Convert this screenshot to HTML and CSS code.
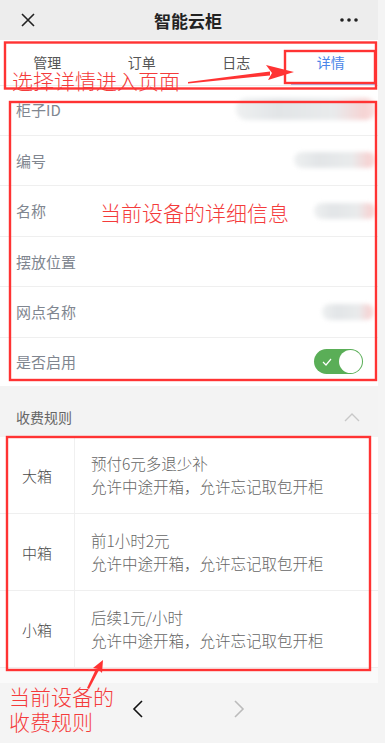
FILE: index.html
```html
<!DOCTYPE html>
<html>

<head>
    <meta charset="utf-8">
    <title>智能云柜</title>
    <link rel="stylesheet" href="styles.css">
</head>

<body>
    <div class="page">
        <header class="nav">
            <svg class="nav-close" width="16" height="16" viewBox="0 0 16 16">
                <path d="M2 2 L14 14 M14 2 L2 14" stroke="#222" stroke-width="1.6" fill="none" />
            </svg>
            <h1 class="nav-title">智能云柜</h1>
            <svg class="nav-more" width="18" height="4" viewBox="0 0 18 4">
                <circle cx="2" cy="2" r="1.8" fill="#222" />
                <circle cx="9" cy="2" r="1.8" fill="#222" />
                <circle cx="16" cy="2" r="1.8" fill="#222" />
            </svg>
        </header>

        <nav class="tabs">
            <span class="tab">管理</span>
            <span class="tab">订单</span>
            <span class="tab">日志</span>
            <span class="tab active">详情</span>
        </nav>

        <!-- device details -->
        <section class="info">
            <div class="row">
                <span class="label">柜子ID</span>
                <span class="smudge smudge-id"></span>
            </div>
            <div class="row">
                <span class="label">编号</span>
                <span class="smudge smudge-no"></span>
            </div>
            <div class="row">
                <span class="label">名称</span>
                <span class="smudge smudge-name"></span>
            </div>
            <div class="row">
                <span class="label">摆放位置</span>
            </div>
            <div class="row">
                <span class="label">网点名称</span>
                <span class="smudge smudge-site"></span>
            </div>
            <div class="row row-last">
                <span class="label">是否启用</span>
                <span class="switch">
                    <svg class="switch-tick" width="10" height="8" viewBox="0 0 10 8">
                        <path d="M1 4 L4 7 L9 1" stroke="#fff" stroke-width="1.2" fill="none" />
                    </svg>
                    <span class="switch-knob"></span>
                </span>
            </div>
        </section>

        <div class="section-head">
            <span>收费规则</span>
            <svg width="16" height="9" viewBox="0 0 16 9">
                <path d="M1 8 L8 1 L15 8" stroke="#c8c8c8" stroke-width="1.4" fill="none" />
            </svg>
        </div>

        <!-- fee rules -->
        <section class="fees">
            <div class="fee">
                <div class="fee-size">大箱</div>
                <div class="fee-desc">
                    <p>预付6元多退少补</p>
                    <p>允许中途开箱，允许忘记取包开柜</p>
                </div>
            </div>
            <div class="fee">
                <div class="fee-size">中箱</div>
                <div class="fee-desc">
                    <p>前1小时2元</p>
                    <p>允许中途开箱，允许忘记取包开柜</p>
                </div>
            </div>
            <div class="fee">
                <div class="fee-size">小箱</div>
                <div class="fee-desc">
                    <p>后续1元/小时</p>
                    <p>允许中途开箱，允许忘记取包开柜</p>
                </div>
            </div>
        </section>

        <div class="spacer"></div>

        <footer class="toolbar">
            <svg width="12" height="18" viewBox="0 0 12 18">
                <path d="M10 1 L2 9 L10 17" stroke="#111" stroke-width="1.6" fill="none" />
            </svg>
            <svg width="12" height="18" viewBox="0 0 12 18">
                <path d="M2 1 L10 9 L2 17" stroke="#bbb" stroke-width="1.6" fill="none" />
            </svg>
        </footer>

        <!-- red annotations drawn over the screenshot -->
        <svg class="marks" width="378" height="743" viewBox="0 0 378 743">
            <g fill="none" stroke="#f33" stroke-width="2.4">
                <rect x="5" y="42.5" width="371" height="46" />
                <rect x="285" y="51" width="90" height="32" />
                <rect x="10" y="102" width="366" height="278" />
                <rect x="7" y="437" width="363" height="233" />
            </g>
            <g fill="#f33">
                <polygon points="188,82 270,71.5 270,75.5 188,83.5" />
                <polygon points="266,65 294,72 268,80 272,73" />
                <polygon points="87,688 96,669 99,670 89,689" />
                <polygon points="93,668 103,660 102,673 98,669" />
            </g>
        </svg>
        <span class="note note-tab">选择详情进入页面</span>
        <span class="note note-info">当前设备的详细信息</span>
        <span class="note note-fee">当前设备的<br>收费规则</span>
    </div>
</body>

</html>
```

FILE: styles.css
```css
body {
    background: #f4f4f4;
    font-family: "Noto Sans CJK SC", "Noto Sans", sans-serif;
    margin: 0;
    padding: 0;
}

.page {
    background: #f3f3f3;
    display: flex;
    flex-direction: column;
    height: 743px;
    overflow: hidden;
    position: relative;
    width: 378px;
}

.nav {
    align-items: center;
    background: #ededed;
    display: flex;
    flex: none;
    height: 40px;
    justify-content: space-between;
    padding: 0 20px 0 20px;
}

.nav-title {
    color: #222;
    font-size: 17px;
    font-weight: bold;
    margin: 0;
}

.tabs {
    background: #fff;
    border-bottom: 1px solid #ececec;
    display: grid;
    flex: none;
    grid-template-columns: repeat(4, 1fr);
    height: 45px;
}

.tab {
    align-items: center;
    color: #555;
    display: flex;
    font-size: 14px;
    justify-content: center;
    padding-bottom: 2px;
    position: relative;
}

.tab.active {
    color: #4a86e8;
}

.tab.active::after {
    background: #aab8f0;
    bottom: 0;
    content: "";
    height: 2px;
    left: 7px;
    position: absolute;
    right: 2px;
}

.info {
    background: #fff;
    flex: none;
}

.row {
    align-items: center;
    border-bottom: 1px solid #efefef;
    display: flex;
    height: 49.5px;
    justify-content: space-between;
    padding: 0 16px;
}

.row:first-child {
    box-sizing: border-box;
    height: 49.7px;
    padding-bottom: 2px;
}

.row-last {
    border-bottom: none;
    height: 48.5px;
    padding-right: 15px;
}

.label {
    color: #808690;
    font-size: 15px;
}

.smudge {
    background: linear-gradient(90deg, #eef0f1 0%, #e2e5e7 30%, #e9ebec 70%, #f6d3d3 92%, #fbe2e2 100%);
    border-radius: 10px;
    filter: blur(2px);
    height: 18px;
    margin-right: -14px;
}

.smudge-id {
    height: 22px;
    width: 140px;
}

.smudge-no {
    height: 16px;
    width: 82px;
}

.smudge-name {
    height: 16px;
    width: 62px;
}

.smudge-site {
    height: 16px;
    margin-right: -12px;
    width: 52px;
}

.switch {
    align-items: center;
    background: #5aae57;
    border-radius: 13px;
    display: flex;
    height: 25px;
    justify-content: space-between;
    padding: 0 1px 0 8px;
    width: 40px;
}

.switch-knob {
    background: #fff;
    border-radius: 50%;
    height: 23px;
    width: 23px;
}

.section-head {
    align-items: center;
    color: #666;
    display: flex;
    flex: none;
    font-size: 14px;
    justify-content: space-between;
    line-height: 22px;
    padding: 20px 18px 9px 16px;
}

.fees {
    background: #fff;
    flex: none;
}

.fee {
    border-bottom: 1px solid #efefef;
    display: flex;
    height: 76px;
}

.fee-size {
    align-items: center;
    border-right: 1px solid #f0f0f0;
    color: #4a4a4a;
    display: flex;
    font-size: 15px;
    font-weight: 300;
    padding-left: 22px;
    width: 52px;
}

.fee-desc {
    color: #666;
    display: flex;
    flex-direction: column;
    font-size: 15.5px;
    font-weight: 300;
    justify-content: center;
    line-height: 23px;
    padding-left: 16px;
}

.fee-desc p {
    margin: 0;
}

.spacer {
    background: #fafafa;
    flex: none;
    height: 15px;
}

.toolbar {
    align-items: center;
    background: #f4f4f4;
    display: flex;
    flex: 1;
    gap: 89px;
    padding: 0 0 8px 132px;
}

.marks {
    left: 0;
    pointer-events: none;
    position: absolute;
    top: 0;
}

.note {
    color: #f43b3b;
    font-size: 21px;
    font-weight: 300;
    line-height: 25px;
    position: absolute;
}

.note-tab {
    left: 12px;
    top: 68px;
}

.note-info {
    left: 100px;
    top: 200px;
}

.note-fee {
    left: 9px;
    top: 684px;
}
```
